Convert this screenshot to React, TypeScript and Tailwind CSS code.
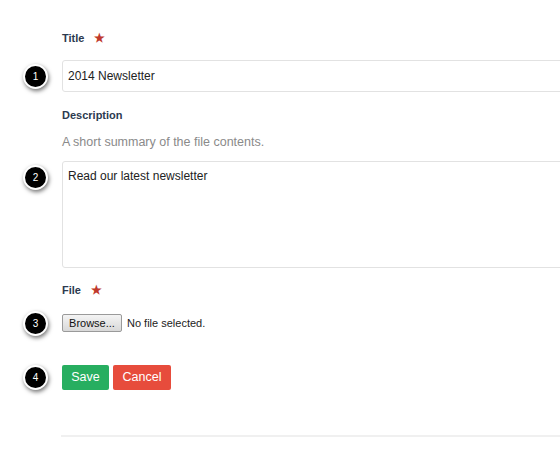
import React from "react";

const font = { fontFamily: '"Liberation Sans", Arial, sans-serif' };

const Badge = ({ n }: { n: number }) => (
  <div className="w-[62px] shrink-0 flex items-center pl-[23px]">
    <div className="h-[25px] w-[25px] rounded-full bg-black border-2 border-white shadow-[1px_2px_4px_rgba(0,0,0,0.55)] flex items-center justify-center text-[10px] text-white">
      {n}
    </div>
  </div>
);

const Label = ({ text, req }: { text: string; req?: boolean }) => (
  <div className="pl-[62px] h-4 flex items-center text-[11px] font-bold text-[#2c3a4f]">
    {text}
    {req && <span className="ml-[10px] text-[12px] text-[#c0392b]">★</span>}
  </div>
);

export default function App() {
  return (
    <div className="w-[560px] h-[457px] overflow-hidden bg-white" style={font}>
      <div className="pt-[30px]">
        <Label text="Title" req />
        <div className="mt-[14px] flex items-center">
          <Badge n={1} />
          <div className="h-[32px] w-[520px] shrink-0 border border-[#e2e2e2] rounded-[3px] pl-[5px] flex items-center text-[12px] text-[#222]">
            2014 Newsletter
          </div>
        </div>

        <div className="mt-[15px]">
          <Label text="Description" />
        </div>
        <div className="mt-[11px] pl-[62px] h-4 flex items-center text-[12.5px] text-[#8a8a8a]">
          A short summary of the file contents.
        </div>
        <div className="mt-[11px] flex items-start">
          <div className="pt-[4px]">
            <Badge n={2} />
          </div>
          <div className="h-[107px] w-[520px] shrink-0 border border-[#e2e2e2] rounded-[3px] pl-[5px] pt-[5px] text-[12px] text-[#222]">
            Read our latest newsletter
          </div>
        </div>

        <div className="mt-[14px]">
          <Label text="File" req />
        </div>
        <div className="mt-[16px] flex items-center h-[18px]">
          <Badge n={3} />
          <div className="h-[18px] w-[60px] flex items-center justify-center border border-[#9a9a9a] rounded-[2px] bg-gradient-to-b from-[#f4f4f4] to-[#d8d8d8] text-[11px] text-[#111]">
            Browse...
          </div>
          <span className="ml-[5px] text-[11px] text-[#222]">No file selected.</span>
        </div>

        <div className="mt-[33px] flex items-center">
          <Badge n={4} />
          <div className="flex gap-[4px]">
            <div className="h-[25px] w-[47px] rounded-[2px] bg-[#27ae60] text-white text-[12.5px] flex items-center justify-center">
              Save
            </div>
            <div className="h-[25px] w-[58px] rounded-[2px] bg-[#e74c3c] text-white text-[12.5px] flex items-center justify-center">
              Cancel
            </div>
          </div>
        </div>

        <div className="mt-[45px] ml-[61px] h-[2px] bg-[#f0f0f0]" />
      </div>
    </div>
  );
}
